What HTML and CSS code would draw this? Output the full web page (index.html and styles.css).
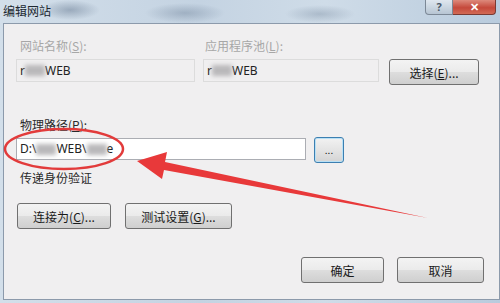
FILE: index.html
```html
<!DOCTYPE html>
<html lang="zh-CN">
<head>
    <meta charset="UTF-8">
    <title>编辑网站</title>
    <link rel="stylesheet" href="styles.css">
</head>
<body>
    <div class="window">
        <div class="title-bar">
            <span class="title">编辑网站</span>
            <div class="caption-buttons">
                <span class="btn-help">?</span>
                <span class="btn-close">✕</span>
            </div>
        </div>
        <div class="frame">
            <div class="panel">
                <div class="site-grid">
                    <span class="label disabled">网站名称(<u>S</u>):</span>
                    <span class="label disabled">应用程序池(<u>L</u>):</span>
                    <span></span>
                    <div class="field readonly">r<span class="blur"></span>WEB</div>
                    <div class="field readonly">r<span class="blur"></span>WEB</div>
                    <button class="btn btn-select">选择(<u>E</u>)...</button>
                </div>

                <div class="label path-label">物理路径(<u>P</u>):</div>
                <div class="path-row">
                    <div class="field path-field">D:\<span class="blur"></span>WEB\<span class="blur"></span>e</div>
                    <button class="btn btn-browse">...</button>
                </div>

                <div class="label auth-label">传递身份验证</div>
                <div class="auth-row">
                    <button class="btn btn-connect">连接为(<u>C</u>)...</button>
                    <button class="btn btn-test">测试设置(<u>G</u>)...</button>
                </div>

                <div class="footer">
                    <button class="btn btn-ok">确定</button>
                    <button class="btn btn-cancel">取消</button>
                </div>
            </div>
        </div>
    </div>

    <svg class="marks" width="500" height="303" viewBox="0 0 500 303">
        <ellipse cx="64" cy="149" rx="59" ry="20" fill="none" stroke="#e23b3b" stroke-width="2.5"/>
        <polygon points="137,161 167,152 165,162 428,218 164,170 162,179" fill="#e8393a"/>
    </svg>
</body>
</html>
```

FILE: styles.css
```css
body {
    margin: 0;
    width: 500px;
    height: 303px;
    overflow: hidden;
    font-family: "Noto Sans", "Noto Sans CJK SC", sans-serif;
    font-size: 12px;
    background: #c3d2e1;
}

.window {
    width: 500px;
    height: 303px;
    background:
        radial-gradient(ellipse 30px 10px at 70px 10px, rgba(90, 110, 135, 0.45), transparent),
        radial-gradient(ellipse 40px 10px at 185px 13px, rgba(90, 110, 135, 0.35), transparent),
        radial-gradient(ellipse 35px 9px at 320px 14px, rgba(90, 110, 135, 0.3), transparent),
        linear-gradient(to right, #d3dfea, #c4d3e2 40%, #cfdce8 65%, #b9cbdd);
}

.title-bar {
    height: 23px;
    display: flex;
    position: relative;
}

.title {
    padding: 4px 0 0 3px;
    font-family: "Noto Sans CJK SC", sans-serif;
    font-size: 12px;
    line-height: 14px;
    color: #202830;
}

.caption-buttons {
    position: absolute;
    top: 0;
    left: 425px;
    display: flex;
}

.btn-help {
    width: 26px;
    height: 14px;
    border: 1px solid #7c8896;
    border-top: none;
    border-radius: 0 0 0 4px;
    background: linear-gradient(#dfe7ef, #b7c5d3);
    color: #4a5868;
    font-weight: bold;
    font-size: 11px;
    line-height: 13px;
    text-align: center;
}

.btn-close {
    width: 42px;
    height: 14px;
    border: 1px solid #7a3a33;
    border-top: none;
    border-left: none;
    border-radius: 0 0 4px 0;
    background: linear-gradient(#dd8a7c, #c5493b 55%, #d26a55);
    color: #fff;
    font-weight: bold;
    font-size: 11px;
    line-height: 14px;
    text-align: center;
}

.frame {
    padding-left: 3px;
}

.panel {
    width: 468px;
    height: 275px;
    border: 1px solid #8c9aab;
    background: #f0eff0;
    padding: 0 15px 0 12px;
}

.label {
    font-family: "Noto Sans CJK SC", sans-serif;
    line-height: 14px;
    color: #2a2a2a;
    padding-left: 4px;
}

.label.disabled {
    color: #a7a7a7;
}

.site-grid {
    display: grid;
    grid-template-columns: 179px 176px 92px;
    column-gap: 8px;
    row-gap: 6px;
    padding-top: 15px;
}

.site-grid .label:nth-child(2) {
    padding-left: 2px;
}

.site-grid .btn-select {
    margin-left: 2px;
}

.field {
    height: 22px;
    box-sizing: border-box;
    border: 1px solid #abadb3;
    background: #fff;
    padding-left: 3px;
    line-height: 20px;
    color: #222;
    display: flex;
    align-items: center;
}

.field.readonly {
    border-color: #dcdcdc;
    background: #f0eff0;
    height: 23px;
}

.blur {
    display: inline-block;
    width: 20px;
    height: 11px;
    background: #b9b8ba;
    filter: blur(2px);
}

.btn {
    height: 26px;
    box-sizing: border-box;
    border: 1px solid #707070;
    border-radius: 3px;
    background: linear-gradient(#f3f3f3, #ebebeb 48%, #dddddd 52%, #cfcfcf);
    font-family: "Noto Sans CJK SC", sans-serif;
    font-size: 12px;
    color: #1a1a1a;
    padding: 0;
}

.path-label {
    margin-top: 33px;
}

.path-row {
    display: flex;
    gap: 8px;
    margin-top: 5px;
}

.path-field {
    width: 290px;
    margin-top: 1px;
}

.btn-browse {
    width: 30px;
    border-color: #3c7fb1;
    background: linear-gradient(#f2f2f2, #e4e4e4 50%, #d4d4d4);
    box-shadow: inset 0 0 0 1px #b9e0f5;
    font-size: 10px;
    line-height: 20px;
}

.auth-label {
    margin-top: 8px;
}

.auth-row {
    display: flex;
    gap: 14px;
    margin-top: 18px;
    padding-left: 1px;
}

.btn-connect {
    width: 94px;
}

.btn-test {
    width: 107px;
}

.footer {
    display: flex;
    justify-content: flex-end;
    gap: 13px;
    margin-top: 28px;
}

.btn-ok {
    width: 83px;
}

.btn-cancel {
    width: 87px;
}

.marks {
    position: absolute;
    top: 0;
    left: 0;
}
```
